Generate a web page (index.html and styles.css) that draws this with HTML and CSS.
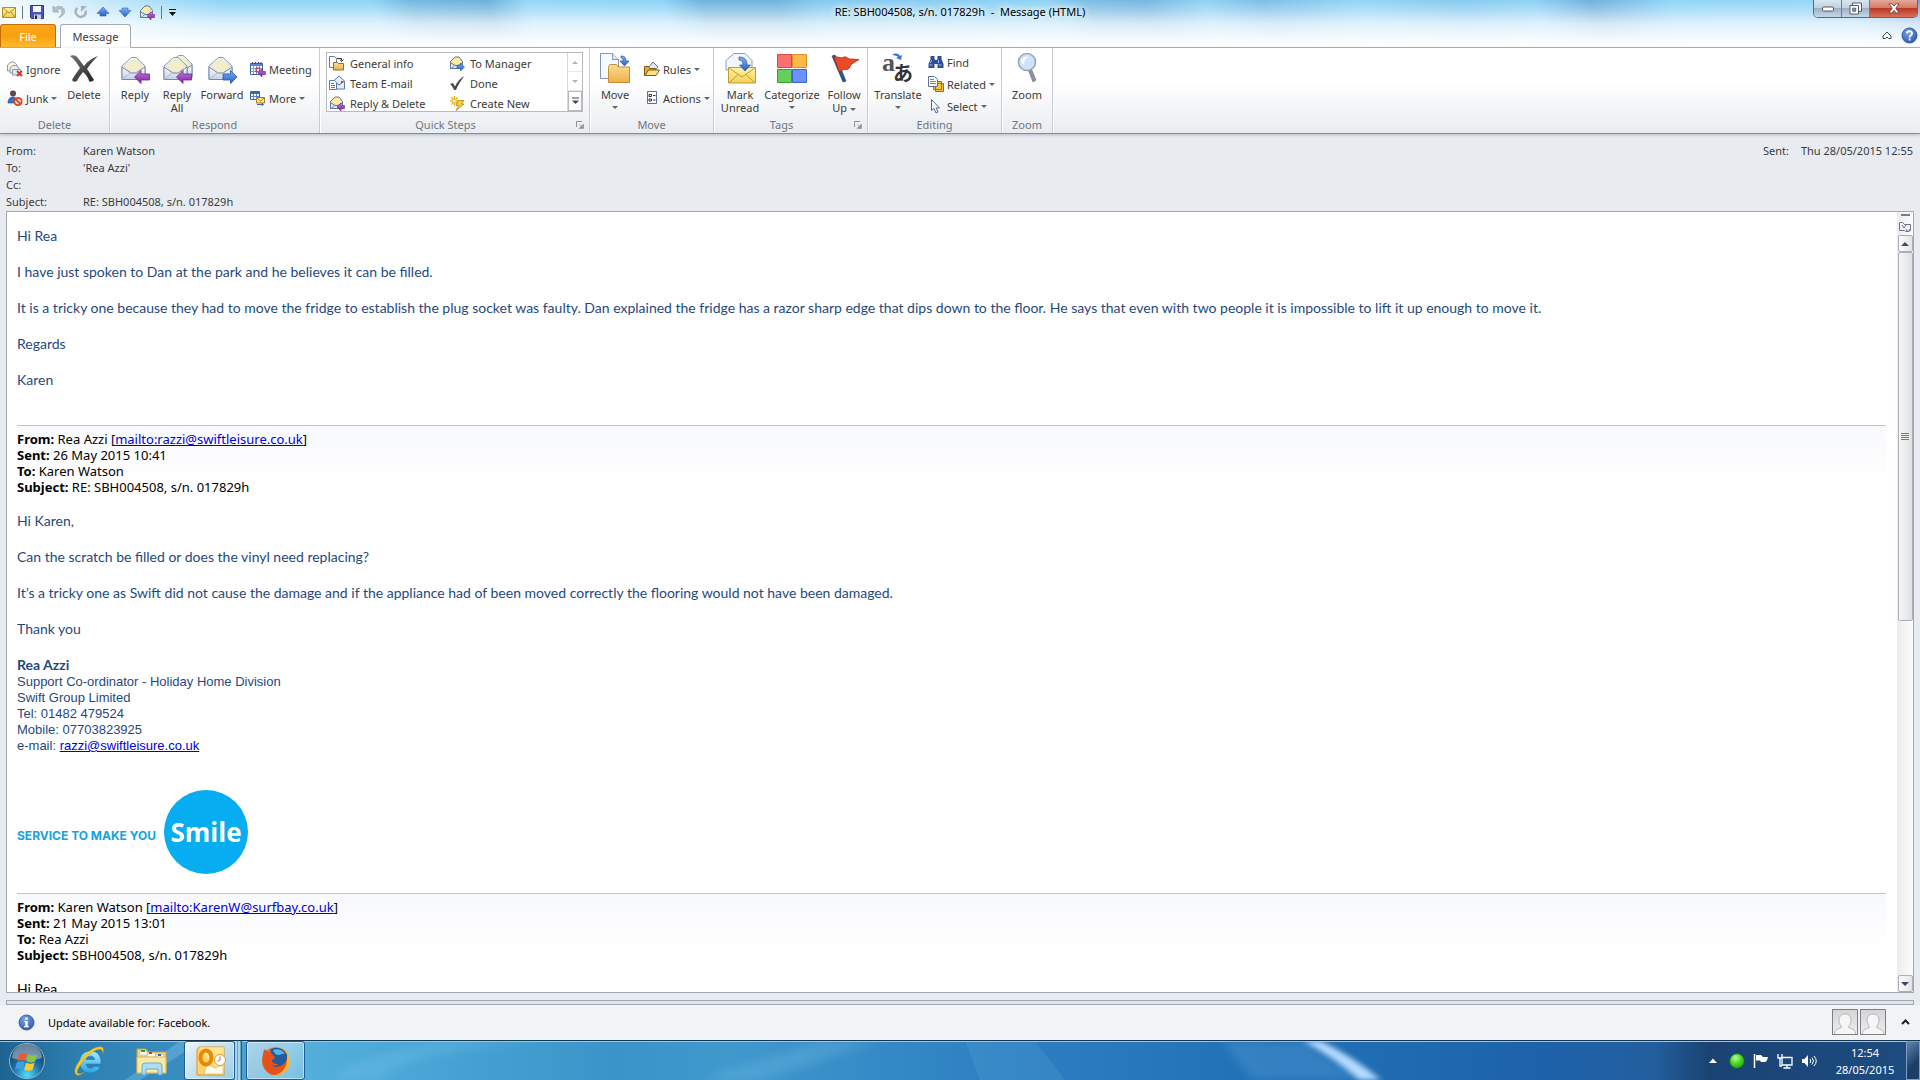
FILE: index.html
```
<!DOCTYPE html>
<html lang="en-GB">
<head>
  <meta charset="UTF-8">
  <meta name="viewport" content="width=device-width, initial-scale=1.0">
  <title>RE: SBH004508, s/n. 017829h - Message (HTML)</title>
  <link rel="stylesheet" href="styles.css">
</head>
<body>

  <!-- === SHARED ICONS === -->
  <svg class="defs" width="0" height="0" aria-hidden="true">
    <defs>
      <linearGradient id="g-paper" x1="0" y1="0" x2="0" y2="1"><stop offset="0" stop-color="#fffef4"/><stop offset="1" stop-color="#dfe3ea"/></linearGradient>
      <linearGradient id="g-front" x1="0" y1="0" x2="0" y2="1"><stop offset="0" stop-color="#fbfcff"/><stop offset="1" stop-color="#c3d1e6"/></linearGradient>
      <linearGradient id="g-purple" x1="0" y1="0" x2="0" y2="1"><stop offset="0" stop-color="#c77be0"/><stop offset="1" stop-color="#7c219c"/></linearGradient>
      <linearGradient id="g-blue" x1="0" y1="0" x2="0" y2="1"><stop offset="0" stop-color="#7db0f4"/><stop offset="1" stop-color="#2560c8"/></linearGradient>
      <linearGradient id="g-folder" x1="0" y1="0" x2="0" y2="1"><stop offset="0" stop-color="#fbdc94"/><stop offset="1" stop-color="#eeb04a"/></linearGradient>
      <linearGradient id="g-yellow" x1="0" y1="0" x2="0" y2="1"><stop offset="0" stop-color="#fff3a8"/><stop offset="1" stop-color="#f3d052"/></linearGradient>
      <linearGradient id="g-dark" x1="0" y1="0" x2="1" y2="1"><stop offset="0" stop-color="#777"/><stop offset="1" stop-color="#1d1d1d"/></linearGradient>
      <radialGradient id="g-info" cx=".4" cy=".3" r=".8"><stop offset="0" stop-color="#7ea6e8"/><stop offset="1" stop-color="#2650a8"/></radialGradient>
      <radialGradient id="g-orb" cx=".5" cy=".9" r=".9"><stop offset="0" stop-color="#4ee0ff"/><stop offset=".45" stop-color="#1f6fa6"/><stop offset="1" stop-color="#0d3050"/></radialGradient>
      <radialGradient id="g-green" cx=".4" cy=".3" r=".8"><stop offset="0" stop-color="#b4ff8c"/><stop offset=".5" stop-color="#4bd425"/><stop offset="1" stop-color="#1f9a0c"/></radialGradient>
      <radialGradient id="g-fox" cx=".3" cy=".6" r=".8"><stop offset="0" stop-color="#e8501c"/><stop offset=".7" stop-color="#ef7a1a"/><stop offset="1" stop-color="#ffd23c"/></radialGradient>
      <linearGradient id="g-ie" x1="0" y1="0" x2="0" y2="1"><stop offset="0" stop-color="#a8ecff"/><stop offset="1" stop-color="#28a4e4"/></linearGradient>

      <symbol id="envelope" viewBox="0 0 32 32">
        <path d="M3 14 12.500 5.500h4.500L26 14v13.500H3z" fill="url(#g-paper)" stroke="#8796ad"/>
        <path d="M5 14 13 8h3.500l8 6-8 7h-4z" fill="#f4edcb" stroke="#e0dcc4" stroke-width=".6"/>
        <path d="M3 15v12.500h23V15l-9 6h-5z" fill="url(#g-front)" stroke="#7588a5"/>
        <path d="M3.500 27 12 20.500M25.500 27 17 20.500" stroke="#a9b8cf" fill="none"/>
      </symbol>
      <symbol id="arrow-left" viewBox="0 0 32 32">
        <path d="M15.500 25 22 18.500V22h8.500v6H22v3.500z" fill="url(#g-purple)" stroke="#74228f" stroke-width=".8"/>
      </symbol>
      <symbol id="arrow-right" viewBox="0 0 32 32">
        <path d="M31 25 24.500 18.500V22H17v6h7.500v3.500z" fill="url(#g-blue)" stroke="#2656a8" stroke-width=".8"/>
      </symbol>
      <symbol id="mail-small" viewBox="0 0 16 16">
        <path d="M1.500 6.500 6 2h4l3.500 4.500v7h-12z" fill="#fdeaa6" stroke="#5f7597"/>
        <path d="M1.500 7.500v6h12v-6L9 10.500H6z" fill="#dbe6f6" stroke="#5b79a8"/>
        <path d="M2 13.500 6.500 10M13 13.500 8.500 10" stroke="#7c95bd" fill="none"/>
      </symbol>
      <symbol id="folder-doc" viewBox="0 0 16 16">
        <path d="M.5 1.500h5l2 2v9h-7z" fill="#fff" stroke="#5f7ba8"/>
        <path d="M8 3.500h4.500v2M11 4.500l1.500 2 2-2" fill="none" stroke="#333"/>
        <path d="M4.500 7.500h4l1 1h5v6.500h-10z" fill="url(#g-folder)" stroke="#94702a"/>
      </symbol>
    </defs>
  </svg>

  <!-- === TITLE BAR === -->
  <header class="title-area">
    <div class="title-bar">
      <div class="quick-access">
        <svg class="app-mail" width="14" height="14" viewBox="0 0 14 14"><path d="M.5 2.500h13v10H.5z" fill="url(#g-yellow)" stroke="#b98a1d"/><path d="M1 3l6 5 6-5M1 12l4-5M13 12 9 7" fill="none" stroke="#b98a1d"/></svg>
        <span class="divider"></span>
        <button title="Save"><svg width="16" height="16" viewBox="0 0 16 16"><path d="M1.500 1.500h13v13h-12l-1-1z" fill="#4757b4" stroke="#2b3888"/><path d="M4 2h8v6H4z" fill="#f4f6fc"/><path d="M5 10.500h7V15H5z" fill="#c9cede"/><path d="M6 11.500h2V15H6z" fill="#1c2458"/></svg></button>
        <button title="Undo"><svg width="16" height="16" viewBox="0 0 16 16"><path d="M2 2v6h6L5.500 5.800C8 4 11 5 11 8c0 2.500-1.500 4-3.500 5.500C12 12 14 10 13.500 6.500 13 2.500 7.500 1 4 4z" fill="#b9c0ca" stroke="#9aa2ae" stroke-width=".7"/></svg></button>
        <button title="Redo"><svg width="16" height="16" viewBox="0 0 16 16"><path d="M4.500 4A5 5 0 1 0 12.500 6.500" fill="none" stroke="#aab1bc" stroke-width="2.400"/><path d="M8 2h6v6z" fill="#aab1bc" transform="rotate(-90 11 5)"/></svg></button>
        <button title="Previous item"><svg width="16" height="16" viewBox="0 0 16 16"><path d="M8 3 14 9.500h-3V12H5V9.500H2z" fill="url(#g-blue)" stroke="#3262c0" stroke-width=".6"/></svg></button>
        <button title="Next item"><svg width="16" height="16" viewBox="0 0 16 16"><path d="M8 13 14 6.500h-3V4H5v2.500H2z" fill="url(#g-blue)" stroke="#3262c0" stroke-width=".6"/></svg></button>
        <button title="Reply &amp; Delete"><svg width="16" height="16" viewBox="0 0 16 16"><use href="#mail-small"/><path d="M8 12 12 8v2.500h3.500v3H12V16z" fill="url(#g-purple)" stroke="#74228f" stroke-width=".6"/></svg></button>
        <span class="divider"></span>
        <button title="Customise"><svg width="9" height="9" viewBox="0 0 9 9"><path d="M1 1.500h7" stroke="#111" /><path d="M1 4h7L4.500 8z" fill="#111"/></svg></button>
      </div>
      <h1>RE: SBH004508, s/n. 017829h&nbsp; -&nbsp; Message (HTML)</h1>
      <div class="window-buttons">
        <button class="win-min" title="Minimise"><svg width="12" height="6" viewBox="0 0 12 6"><rect x=".5" y="1" width="11" height="4" rx="1" fill="#fff" stroke="#555b68"/></svg></button>
        <button class="win-max" title="Restore"><svg width="13" height="13" viewBox="0 0 13 13"><path d="M3.500 1h9v8.500h-9z" fill="#fff" stroke="#555b68"/><path d="M1 3.500h8.500V12H1z" fill="#fff" stroke="#555b68"/><path d="M3.700 6.200h3v3h-3z" fill="#9aa" stroke="#555b68"/></svg></button>
        <button class="win-close" title="Close"><svg width="12" height="11" viewBox="0 0 12 11"><path d="M1 .8h3l2 2.400L8 .8h3L7.800 5.300 11 10H8L6 7.400 4 10H1l3.200-4.700z" fill="#fff" stroke="#5e3a3c" stroke-width=".8"/></svg></button>
      </div>
    </div>
    <nav class="tabs">
      <button class="tab tab-file">File</button>
      <button class="tab tab-active">Message</button>
      <span class="spacer"></span>
      <button class="plain" title="Minimise the Ribbon"><svg width="10" height="9" viewBox="0 0 10 9"><path d="M1 5 5 1l4 4v2.500H6.500L5 6 3.500 7.500H1z" fill="#fff" stroke="#3d4653"/></svg></button>
      <button class="plain" title="Help"><svg width="17" height="17" viewBox="0 0 17 17"><circle cx="8.500" cy="8.500" r="7.500" fill="url(#g-info)" stroke="#2d57a8"/><path d="M6 6.500C6 3.500 11 3.500 11 6.400c0 2-2.400 2-2.400 4M8.600 11.500v2" fill="none" stroke="#fff" stroke-width="1.800"/></svg></button>
    </nav>
  </header>

  <!-- === RIBBON === -->
  <section class="ribbon">
    <div class="group group-delete">
      <div class="group-body">
        <div class="stack">
          <button class="small"><svg width="16" height="16" viewBox="0 0 16 16"><path d="M.5 4 4 1h3l3 3v6H.5z" fill="#fdf4cf" stroke="#8c99ab"/><path d="M3 7l3-2.500h3L12 7v5H3z" fill="#e9eef5" stroke="#8c99ab"/><path d="M5.500 8.500h8V14h-8z" fill="#e1e8f2" stroke="#8c99ab"/><path d="M10 10l5 5M15 10l-5 5" stroke="#d9392a" stroke-width="2"/></svg><span>Ignore</span></button>
          <button class="small"><svg width="16" height="16" viewBox="0 0 16 16"><circle cx="6" cy="3.500" r="3" fill="#5b4b44"/><path d="M1 13c0-4 2-6 5-6s4 2 4 6z" fill="#3a6fc0" stroke="#24498c" stroke-width=".6"/><circle cx="11" cy="11.500" r="3.700" fill="#fbe6df" stroke="#d8431f" stroke-width="1.800"/><path d="M8.500 9l5 5" stroke="#d8431f" stroke-width="1.800"/></svg><span>Junk</span><i class="caret"></i></button>
        </div>
        <button class="large"><svg width="32" height="32" viewBox="0 0 32 32"><path d="M2 4c2-1 4-1 6 0 3 3 5 6 8 10 4-5 8-8 14-10-4 4-8 8-11 13 3 4 5 8 7 11-2 2-4 2-5 1-1-4-3-6-6-9-3 4-5 6-6 9-2 1-4 1-5-1 2-4 5-8 8-12C9 11 6 7 2 4z" fill="url(#g-dark)"/></svg><span>Delete</span></button>
      </div>
      <h2>Delete</h2>
    </div>

    <div class="group group-respond">
      <div class="group-body">
        <button class="large"><svg width="32" height="32" viewBox="0 0 32 32"><use href="#envelope"/><use href="#arrow-left"/></svg><span>Reply</span></button>
        <button class="large"><svg width="32" height="32" viewBox="0 0 32 32"><g transform="translate(5 -2)"><use href="#envelope" width="32" height="32"/></g><use href="#envelope" width="32" height="32"/><use href="#arrow-left"/></svg><span>Reply<br>All</span></button>
        <button class="large large-wide"><svg width="32" height="32" viewBox="0 0 32 32"><use href="#envelope"/><use href="#arrow-right"/></svg><span>Forward</span></button>
        <div class="stack">
          <button class="small"><svg width="16" height="16" viewBox="0 0 16 16"><path d="M.5 2.500h12v11H.5z" fill="#fff" stroke="#3c63ad"/><path d="M1 4h11" stroke="#5e87d0" stroke-width="2"/><path d="M3.500 5v8M6.500 5v8M9.500 5v8M1 7.500h11M1 10.500h11" stroke="#7d9bd2"/><path d="M2.500 1v2M5.500 1v2M8.500 1v2M11 1v2" stroke="#2a4a8c"/><path d="M6 7h4v4H6z" fill="none" stroke="#cc2434"/><path d="M8 12 12 8v2.500h3.500v3H12V16z" fill="url(#g-purple)" stroke="#74228f" stroke-width=".6"/></svg><span>Meeting</span></button>
          <button class="small"><svg width="16" height="16" viewBox="0 0 16 16"><path d="M.5 1.500h9v8h-9z" fill="#fff" stroke="#3c63ad"/><path d="M1 3h8" stroke="#3d64b4" stroke-width="2"/><path d="M3.500 4v5M6.500 4v5M1 6.500h8" stroke="#5f82c4"/><path d="M6.500 7.500h8v5.500h-8z" fill="#ffe79a" stroke="#a57d1e"/><path d="M7 8l3.500 3L14 8" fill="none" stroke="#a57d1e"/><path d="M7 14.500h6M11.500 13l2 1.500-2 1.500" fill="none" stroke="#3c63ad"/></svg><span>More</span><i class="caret"></i></button>
        </div>
      </div>
      <h2>Respond</h2>
    </div>

    <div class="group group-steps">
      <div class="group-body">
        <div class="gallery">
          <div class="gallery-items">
            <button class="small"><svg width="16" height="16"><use href="#folder-doc"/></svg><span>General info</span></button>
            <button class="small"><svg width="16" height="16" viewBox="0 0 16 16"><use href="#mail-small"/><path d="M8 10.500h3.500V8l4 4-4 4v-2.500H8z" fill="url(#g-blue)" stroke="#2656a8" stroke-width=".6"/></svg><span>To Manager</span></button>
            <button class="small"><svg width="16" height="16" viewBox="0 0 16 16"><path d="M4.500 6 10 1l5.500 5v8h-11z" fill="#e3ecf8" stroke="#5b79a8"/><path d="M5 6.500l5 3.500 5-3.500" fill="none" stroke="#5b79a8"/><path d="M12 6h2v2h-2z" fill="#c33"/><path d="M.5 5.500h5l2 2v7h-7z" fill="#fff" stroke="#5b79a8"/><path d="M2 8.500h3M2 10.500h4M2 12.500h4" stroke="#5b79a8"/></svg><span>Team E-mail</span></button>
            <button class="small"><svg width="16" height="16" viewBox="0 0 16 16"><path d="M1 9l3-1 2 3.500C8 7 11 3.500 15.500 1 12 5 9 10 7 15H5C4 12.500 3 10.500 1 9z" fill="#484848"/></svg><span>Done</span></button>
            <button class="small"><svg width="16" height="16" viewBox="0 0 16 16"><use href="#mail-small"/><path d="M8 12 12 8v2.500h3.500v3H12V16z" fill="url(#g-purple)" stroke="#74228f" stroke-width=".6"/></svg><span>Reply &amp; Delete</span></button>
            <button class="small"><svg width="16" height="16" viewBox="0 0 16 16"><path d="M5.500 1v10M1 6h9M2.500 2.500l6 7M8.500 2.500l-6 7" stroke="#e8b61d" stroke-width="1.400"/><circle cx="5.500" cy="6" r="1.500" fill="#fff6c4"/><path d="M9 5.500h6L12.500 9H15l-8 6.500 2.500-5H7z" fill="#f7cf3c" stroke="#a67c12" stroke-width=".7"/></svg><span>Create New</span></button>
          </div>
          <div class="gallery-scroll">
            <button disabled title="Up"><i class="caret caret-up"></i></button>
            <button disabled title="Down"><i class="caret"></i></button>
            <button title="More"><svg width="9" height="8" viewBox="0 0 9 8"><path d="M1 1h7" stroke="#444"/><path d="M1 3.500h7L4.500 7z" fill="#444"/></svg></button>
          </div>
        </div>
      </div>
      <h2>Quick Steps</h2>
      <button class="launcher" title="Manage Quick Steps"><svg width="8" height="8" viewBox="0 0 8 8"><path d="M.5 6V.5H6" fill="none" stroke="#8a919b"/><path d="M3 3l3 3M7.500 3v4.500H3z" fill="#8a919b" stroke="#8a919b" stroke-width=".6"/></svg></button>
    </div>

    <div class="group group-move">
      <div class="group-body">
        <button class="large"><svg width="32" height="32" viewBox="0 0 32 32"><path d="M1.500 1.500h12l6 6v19h-18z" fill="#f6f9fd" stroke="#7f96bb"/><path d="M13.500 1.500v6h6" fill="#dce6f4" stroke="#7f96bb"/><path d="M22 4c4 0 5 2 5 5h3l-4.500 5L21 9h3c0-2 0-3-2-3z" fill="url(#g-blue)" stroke="#2656a8" stroke-width=".7"/><path d="M9.500 15.500c0-2 1-3 2-3h6l2 2.500h11v15.500h-21z" fill="url(#g-folder)" stroke="#c48d33"/></svg><span>Move</span><i class="caret"></i></button>
        <div class="stack">
          <button class="small"><svg width="16" height="16" viewBox="0 0 16 16"><path d="M3 8 9 1l5 5-4 5z" fill="#dfe9f6" stroke="#5d7294"/><path d="M.5 5.500h4l1 2h6v7H.5z" fill="#e9a92d" stroke="#7d5a17"/><path d="M1 14.500 4.500 9h11L12 14.500z" fill="#ffdf88" stroke="#7d5a17"/></svg><span>Rules</span><i class="caret"></i></button>
          <button class="small"><svg width="16" height="16" viewBox="0 0 16 16"><path d="M3.500 1.500h9v12h-9z" fill="#fff" stroke="#596f93"/><path d="M5 4.500h2.500v2H5zM5 9h2.500v2H5z" fill="none" stroke="#333"/><path d="M9 5.500h2.500M9 10h2.500" stroke="#333"/></svg><span>Actions</span><i class="caret"></i></button>
        </div>
      </div>
      <h2>Move</h2>
    </div>

    <div class="group group-tags">
      <div class="group-body">
        <button class="large"><svg width="32" height="32" viewBox="0 0 32 32"><path d="M2 14V8.500L10 1.500h11l7 7V18H2z" fill="#f2f6fc" stroke="#8b9db9"/><path d="M4.500 15.500h27v15.500h-27z" fill="url(#g-yellow)" stroke="#c49a31"/><path d="M5 16l13 9 13-9M5 31l9-8.500M31 31l-9-8.500" fill="none" stroke="#c49a31"/><path d="M15 5c6 0 8 3 8 8h3.500L21 19l-5.500-6H19c0-3-1-5-4-5z" fill="url(#g-blue)" stroke="#2656a8" stroke-width=".7"/></svg><span>Mark<br>Unread</span></button>
        <button class="large"><svg width="32" height="32" viewBox="0 0 32 32"><path d="M1.500 2.500h14v13h-14z" fill="#fb7070" stroke="#d64747"/><path d="M16.500 2.500h14v13h-14z" fill="#fcb94a" stroke="#d98e23"/><path d="M1.500 17.500h14v13h-14z" fill="#66cf5a" stroke="#36a02d"/><path d="M16.500 17.500h14v13h-14z" fill="#6b93fb" stroke="#3a62d6"/></svg><span>Categorize</span><i class="caret"></i></button>
        <button class="large"><svg width="32" height="32" viewBox="0 0 32 32"><path d="M4 4l3-1 11 26-3 1z" fill="#31528f" stroke="#1d3566" stroke-width=".6"/><path d="M6 5c4-1 6 2 10 0 3-1 4 3 7 2l8 .500-8 5-2 4c-3 2-5 0-7 2l-3 1z" fill="#ea4a28" stroke="#a82c14" stroke-width=".8"/></svg><span>Follow<br>Up <i class="caret"></i></span></button>
      </div>
      <h2>Tags</h2>
      <button class="launcher" title="Tags"><svg width="8" height="8" viewBox="0 0 8 8"><path d="M.5 6V.5H6" fill="none" stroke="#8a919b"/><path d="M3 3l3 3M7.500 3v4.500H3z" fill="#8a919b" stroke="#8a919b" stroke-width=".6"/></svg></button>
    </div>

    <div class="group group-editing">
      <div class="group-body">
        <button class="large"><svg class="translate" width="32" height="32" viewBox="0 0 32 32"><text x="0" y="19" class="glyph-a">a</text><text x="11" y="29" class="glyph-ja">あ</text><path d="M10 3c4-3 7-1 8 1l2-1-1 5-5-2 2-1c-1-1-3-2-6-2z" fill="#3a72d4"/></svg><span>Translate</span><i class="caret"></i></button>
        <div class="stack">
          <button class="small"><svg width="16" height="16" viewBox="0 0 16 16"><path d="M2.500 2h4v3l1 1h1l1-1V2h4v3l2 5v4h-6v-4h-3v4h-6v-4l2-5z" fill="#2c4f94"/><path d="M3.500 6l-1 3M10.500 6v3M1.500 11h3M10.500 11h3" stroke="#a8c2ee"/></svg><span>Find</span></button>
          <button class="small"><svg width="16" height="16" viewBox="0 0 16 16"><path d="M7.500 7.500h8v8h-8zM5.500 5.500h8v8h-8z" fill="#f7c443" stroke="#94702a"/><path d="M.5.500h6l3 3v7h-9z" fill="#fff" stroke="#5d7294"/><path d="M2 3.500h4M2 5.500h6M2 7.500h6" stroke="#6f86ad"/></svg><span>Related</span><i class="caret"></i></button>
          <button class="small"><svg width="16" height="16" viewBox="0 0 16 16"><path d="M3.500 1.500v11l2.500-2 2 4.500 2-1-2-4h3.500z" fill="#fff" stroke="#4f6a96"/></svg><span>Select</span><i class="caret"></i></button>
        </div>
      </div>
      <h2>Editing</h2>
    </div>

    <div class="group group-zoom">
      <div class="group-body">
        <button class="large"><svg width="32" height="32" viewBox="0 0 32 32"><path d="M17 17l3-1 5 12-3 2z" fill="#8d929b" stroke="#666b75" stroke-width=".6"/><circle cx="16" cy="10" r="8.500" fill="#cfe3fa" stroke="#9aa4b3" stroke-width="1.600"/><path d="M10 10c0-4 4-6 8-5-3 1-5 3-5 8z" fill="#fff"/></svg><span>Zoom</span></button>
      </div>
      <h2>Zoom</h2>
    </div>
  </section>

  <!-- === MESSAGE === -->
  <section class="message">
    <div class="message-header">
      <dl class="fields">
        <dt>From:</dt><dd>Karen Watson</dd>
        <dt>To:</dt><dd>'Rea Azzi'</dd>
        <dt>Cc:</dt><dd></dd>
        <dt>Subject:</dt><dd>RE: SBH004508, s/n. 017829h</dd>
      </dl>
      <dl class="sent"><dt>Sent:</dt><dd>Thu 28/05/2015 12:55</dd></dl>
    </div>

    <div class="reader">
      <article class="mail">
        <p>Hi Rea</p>
        <p>I have just spoken to Dan at the park and he believes it can be filled.</p>
        <p>It is a tricky one because they had to move the fridge to establish the plug socket was faulty. Dan explained the fridge has a razor sharp edge that dips down to the floor. He says that even with two people it is impossible to lift it up enough to move it.</p>
        <p>Regards</p>
        <p>Karen</p>

        <div class="quote quote-first">
          <div><b>From:</b> Rea Azzi [<a href="mailto:razzi@swiftleisure.co.uk">mailto:razzi@swiftleisure.co.uk</a>]</div>
          <div><b>Sent:</b> 26 May 2015 10:41</div>
          <div><b>To:</b> Karen Watson</div>
          <div><b>Subject:</b> RE: SBH004508, s/n. 017829h</div>
        </div>

        <p>Hi Karen,</p>
        <p>Can the scratch be filled or does the vinyl need replacing?</p>
        <p>It’s a tricky one as Swift did not cause the damage and if the appliance had of been moved correctly the flooring would not have been damaged.</p>
        <p>Thank you</p>
        <p class="signer">Rea Azzi</p>
        <address class="signature">
          Support Co-ordinator - Holiday Home Division<br>
          Swift Group Limited<br>
          Tel: 01482 479524<br>
          Mobile: 07703823925<br>
          e-mail: <a href="mailto:razzi@swiftleisure.co.uk">razzi@swiftleisure.co.uk</a>
        </address>

        <div class="slogan">
          <span class="slogan-text">SERVICE TO MAKE YOU</span>
          <span class="slogan-badge">Smile</span>
        </div>

        <div class="quote">
          <div><b>From:</b> Karen Watson [<a href="mailto:KarenW@surfbay.co.uk">mailto:KarenW@surfbay.co.uk</a>]</div>
          <div><b>Sent:</b> 21 May 2015 13:01</div>
          <div><b>To:</b> Rea Azzi</div>
          <div><b>Subject:</b> SBH004508, s/n. 017829h</div>
        </div>
        <p class="oldest">Hi Rea</p>
      </article>

      <div class="scrollbar">
        <span class="split-handle"></span>
        <button class="ruler-btn" title="Select browse object"><svg width="14" height="14" viewBox="0 0 14 14"><path d="M1.500 2.500h3l2 2h6v6l-2 1h-3l-1-1h-5z" fill="#eef1f5" stroke="#6b7482"/><path d="M4 5l2 3 2-3M8 9l2 3 2-3" fill="none" stroke="#6b7482"/></svg></button>
        <button class="scroll-btn" title="Scroll up"><i class="caret caret-up"></i></button>
        <div class="track"><div class="thumb"></div></div>
        <button class="scroll-btn" title="Scroll down"><i class="caret"></i></button>
      </div>
    </div>
    <div class="splitter"></div>
  </section>

  <!-- === PEOPLE PANE === -->
  <section class="people-pane">
    <svg width="17" height="17" viewBox="0 0 17 17"><circle cx="8.500" cy="8.500" r="7.500" fill="url(#g-info)" stroke="#3a63b4"/><path d="M7.300 3.500h2.400v2.200H7.300zM6.200 7h3.500v5h1.200v1.300H6V12h1.300V8.200H6.200z" fill="#fff"/></svg>
    <span>Update available for: Facebook.</span>
    <span class="spacer"></span>
    <button class="avatar" title="Contact"><svg width="24" height="24" viewBox="0 0 24 24"><path d="M1.500 24c0-4 2-4.500 7-6.500 0-2-2.500-3-2.500-7.500C6 6.500 8.500 4 12 4s6 2.500 6 6c0 4.500-2.500 5.500-2.500 7.500 5 2 7 2.500 7 6.500" fill="#f6f6f7" stroke="#b4b5b8"/></svg></button>
    <button class="avatar" title="Contact"><svg width="24" height="24" viewBox="0 0 24 24"><path d="M1.500 24c0-4 2-4.500 7-6.500 0-2-2.500-3-2.500-7.500C6 6.500 8.500 4 12 4s6 2.500 6 6c0 4.500-2.500 5.500-2.500 7.500 5 2 7 2.500 7 6.500" fill="#f6f6f7" stroke="#b4b5b8"/></svg></button>
    <button class="plain pane-toggle" title="Expand"><svg width="9" height="6" viewBox="0 0 9 6"><path d="M1 5l3.500-3.500L8 5" fill="none" stroke="#222" stroke-width="2"/></svg></button>
  </section>

  <!-- === TASKBAR === -->
  <footer class="taskbar">
    <svg class="streaks" viewBox="0 0 1920 40" preserveAspectRatio="none">
      <path d="M125 40 180 0h22l-62 40z" fill="#8cc8ee" opacity=".35"/>
      <path class="soft" d="M330 40c20-20 60-32 110-40h100c-90 8-140 20-160 40z" fill="#8fd0ef" opacity=".2"/>
      <path class="soft" d="M700 40 820 0h60L760 40z" fill="#8fd0ef" opacity=".2"/>
      <path d="M965 0h70l30 40h-85z" fill="#6fb8e8" opacity=".16"/>
      <path class="soft" d="M1222 0h80l60 40h-110z" fill="#5aa2dc" opacity=".35"/>
      <path class="beam" d="M1303 0h18q32 16 60 40h-22q-26-24-56-40z" fill="#b5dbff"/>
    </svg>
    <button class="start" title="Start"><svg width="38" height="38" viewBox="0 0 38 38"><circle cx="19" cy="19" r="17.500" fill="url(#g-orb)" stroke="#8fb6ce"/><path d="M4 16a15 14 0 0 1 30 0q-15 5-30 0z" fill="#fff" opacity=".38"/><path d="M11 12.500q4-2.500 8-.500l-1.800 7q-4-2-8 .300z" fill="#f0592a"/><path d="M20.200 12.500q4 2.200 8.800 0l-2 7q-4 2-8.500 0z" fill="#8cc63e"/><path d="M8.800 20.500q4-2.200 8-.200l-1.900 7q-4-1.900-8 .200z" fill="#3ba0e6"/><path d="M18 20.800q4.500 2 8.600 0l-2 7q-4.500 2-8.500 0z" fill="#fdc92e"/></svg></button>
    <button class="pinned" title="Internet Explorer"><svg width="34" height="34" viewBox="0 0 34 34"><path d="M28 22.500h-6c-1.500 2.800-7.500 2.400-8-2.500h15C29.500 11 25 7 18.500 7S7.500 12 7.500 18s4.500 11 11 11c5 0 8.500-2.500 9.500-6.500zM14 15.500c.800-4.500 8.200-4.500 8.700 0z" fill="url(#g-ie)" stroke="#1c7fc0" stroke-width=".6"/><path d="M5 31c-4-1.500-2-9 4-16C17 5 28 .500 31 4c1 1.300.5 3.500-.5 5.500.300-2 0-3.500-1.500-4-4-1-12 4-17 10.500S3.500 28 6 29.500c1.500.8 4 0 7-2-3.500 3-6 4.200-8 3.500z" fill="#f6cb2c" stroke="#c59310" stroke-width=".4"/></svg></button>
    <button class="pinned" title="Explorer"><svg width="34" height="34" viewBox="0 0 34 34"><path d="M2 8V5h9l2 3h18v21H2z" fill="#f1d27c" stroke="#c79f45"/><path d="M5 7h7v4H5zM13 9h7v4h-7zM21 11h8v4h-8z" fill="#fff" stroke="#b9b9a0" stroke-width=".5"/><path d="M6 6h4v2H6z" fill="#3a9a38"/><path d="M14 8h3v2h-3z" fill="#d33"/><path d="M23 10h3v2h-3z" fill="#36c"/><path d="M2 13h29v16H2z" fill="#fae9a5" stroke="#d7b55c"/><path d="M7 31V22q0-3 3-3h14q3 0 3 3v9h-4v-6H11v6z" fill="#a7dcf6" stroke="#5aa6d4" opacity=".9"/></svg></button>
    <button class="task task-active" title="Outlook"><svg width="32" height="32" viewBox="0 0 32 32"><path d="M5 2h25v28H3V5z" fill="#fbd567" stroke="#d9932a"/><path d="M5 2h25v28L18 18z" fill="#fff0b3" opacity=".6"/><path d="M13 19l8 4 8-3v9H10z" fill="#fffbee" stroke="#e9c57c"/><ellipse cx="12" cy="12.500" rx="5.500" ry="7" fill="none" stroke="#e98708" stroke-width="4"/><circle cx="26" cy="15" r="5.500" fill="#fff" stroke="#dc9a2e"/><path d="M26 11.500V15l-2.500 1.500" fill="none" stroke="#b7751a"/></svg></button>
    <span class="stack-edge"></span>
    <button class="task" title="Firefox"><svg width="32" height="32" viewBox="0 0 32 32"><circle cx="16" cy="16" r="14" fill="url(#g-fox)"/><path d="M10 5c6-5 17-2 18 9 1 7-4 11-9 11-4 0-7-2-7-5 2 1 4 1 6-1-3 0-6-1-6-4l3-2c-2-2-4-4-5-8z" fill="#225a9e"/><path d="M13 5c5-2 10 0 12 4-3-1-4 1-7 1-2 0-4-2-5-5z" fill="#58b3e6"/><path d="M3 9c0-2 1-4 2-5 1 2 3 3 5 3l5 5c-1 2-4 2-5 4 0 5 5 7 10 5 4-1 6-4 7-8 3 8-3 16-11 17C8 31 1 22 3 9z" fill="#e5511d"/><path d="M27 9c4 5 4 12-1 17-3 3-7 4-11 4 8-2 13-8 12-21z" fill="#fdb827"/></svg></button>

    <span class="spacer"></span>
    <div class="tray">
      <button title="Show hidden icons"><svg width="8" height="5" viewBox="0 0 8 5"><path d="M0 5l4-4.500L8 5z" fill="#fff"/></svg></button>
      <svg width="16" height="16" viewBox="0 0 16 16"><circle cx="8" cy="8" r="7.200" fill="url(#g-green)" stroke="#1b7e10" stroke-width=".6"/></svg>
      <svg width="16" height="16" viewBox="0 0 16 16"><path d="M1.500 1v14" stroke="#fff" stroke-width="1.500"/><path d="M3 2h5l2 2h5c-.500 3-2 5-3 5H8L7 7.500H3z" fill="#fff"/></svg>
      <svg width="16" height="16" viewBox="0 0 16 16"><path d="M5 4.500h10v7.500H5zM10 12v2.500M6.500 15h7" fill="none" stroke="#fff" stroke-width="1.300"/><path d="M1 1v4h4V1M3 5v8h2" fill="none" stroke="#fff" stroke-width="1.300"/></svg>
      <svg width="16" height="16" viewBox="0 0 16 16"><path d="M1 6h2.500L7 2v12l-3.500-4H1z" fill="#fff"/><path d="M9 6q1.500 2 0 4M11 4.500q3 3.500 0 7M13 3q4.500 5 0 10" fill="none" stroke="#fff"/></svg>
    </div>
    <time class="clock" datetime="2015-05-28T12:54">12:54<br>28/05/2015</time>
    <button class="show-desktop" title="Show desktop"></button>
  </footer>

</body>
</html>
```

FILE: styles.css
```
* {
  margin: 0;
  padding: 0;
  box-sizing: border-box;
}

body {
  font-family: "Noto Sans", "Open Sans", sans-serif;
  font-size: 11px;
  color: #3b3b3b;
  background: #e8ecf1;
  height: 100vh;
  overflow: hidden;
  display: flex;
  flex-direction: column;
}

button {
  font: inherit;
  color: inherit;
  background: none;
  border: none;
  cursor: pointer;
}

svg {
  display: block;
  flex: none;
}

.defs {
  position: absolute;
}

.spacer {
  flex: 1;
}

.caret {
  display: inline-block;
  width: 0;
  height: 0;
  border: 3px solid transparent;
  border-top-color: #666;
  border-bottom: none;
  vertical-align: middle;
}

.caret-up {
  border-top: none;
  border-bottom: 3px solid #666;
}

/* === TITLE BAR === */
.title-area {
  flex: none;
  border-bottom: 1px solid #a3a9b2;
  background:
    linear-gradient(to right, rgba(255,255,255,0.9) 0, rgba(255,255,255,0) 220px),
    linear-gradient(to bottom, rgba(255,255,255,0) 0, rgba(255,255,255,0.25) 20%, rgba(255,255,255,0.7) 50%, #fff 95%),
    linear-gradient(70deg, #8fd4f6 19%, #8fd4f6 20%, #74b8e0 22%, #6cb0db 26%, #92d6f7 28%, #8dd3f6 35%, #6fb4de 37%, #6fb4de 41%, #82c9ee 43%, #8ed3f5 55%, #79bce4 57%, #74b7e0 60%, #8fd2f4 63%, #7cbfe6 66%, #94d5f6 71%, #86caee 76%, #8ed2f5 80%, #70b0dc 83%, #8fd4f7 87%, #93d6f8 96%, #6fa5d6 100%);
}

.title-bar {
  display: grid;
  grid-template-columns: 1fr auto 1fr;
  height: 24px;
}

.title-bar h1 {
  font-size: 11px;
  font-weight: normal;
  line-height: 24px;
  color: #000;
  text-shadow: 0 0 6px #fff, 0 0 8px #fff;
}

.quick-access {
  display: flex;
  align-items: center;
  gap: 6px;
  padding-left: 2px;
}

.divider {
  width: 1px;
  height: 13px;
  background: #6c7580;
}

.window-buttons {
  justify-self: end;
  display: flex;
  height: 18px;
  margin-right: 2px;
  border: 1px solid #5b6878;
  border-top: none;
  border-radius: 0 0 5px 5px;
  overflow: hidden;
}

.window-buttons button {
  width: 28px;
  display: flex;
  align-items: center;
  justify-content: center;
  border-right: 1px solid #6f7c8c;
  background: linear-gradient(#d9e6f1 0, #c2d2e0 45%, #9db1c4 50%, #c6d8e8 100%);
}

.window-buttons .win-close {
  width: 47px;
  border-right: none;
  background: linear-gradient(#e5a899 0, #d47a68 45%, #b93a26 50%, #d9705a 100%);
}

/* === TABS === */
.tabs {
  display: flex;
  align-items: center;
  height: 23px;
  padding-right: 2px;
  gap: 9px;
}

.tab {
  align-self: stretch;
  border-radius: 3px 3px 0 0;
}

.tab-file {
  width: 56px;
  color: #fff;
  border: 1px solid #c3700a;
  border-bottom: none;
  background: linear-gradient(#f9a61a 0, #f9a010 50%, #fdbb2c 100%);
}

.tab-active {
  width: 71px;
  margin: 0 0 -1px -5px;
  background: #fff;
  border: 1px solid #a3a9b2;
  border-bottom: none;
}

/* === RIBBON === */
.ribbon {
  flex: none;
  display: flex;
  height: 86px;
  background: linear-gradient(#fff 0, #fff 40%, #e9ecf0 100%);
  border-bottom: 1px solid #868c94;
  box-shadow: 0 1px 3px #b5bac2;
}

.group {
  position: relative;
  display: flex;
  flex-direction: column;
  border-right: 1px solid #c9cdd3;
  box-shadow: 1px 0 0 #fff;
}

.group h2 {
  font-size: 11px;
  font-weight: normal;
  line-height: 16px;
  color: #6e7680;
  text-align: center;
}

.group-body {
  display: flex;
  height: 69px;
  padding-top: 4px;
}

.group-delete { width: 110px; }
.group-respond { width: 210px; }
.group-steps { width: 270px; }
.group-move { width: 124px; }
.group-tags { width: 154px; }
.group-editing { width: 134px; }
.group-zoom { width: 51px; }

.group-delete .group-body { padding-left: 7px; }
.group-delete .stack { width: 56px; }
.group-respond .group-body { padding-left: 4px; }
.group-respond .stack,
.group-move .stack { padding-left: 4px; }

/* leave room for the launcher in the corner */
.group-steps h2,
.group-tags h2 {
  padding-right: 18px;
}

.large {
  flex: none;
  display: flex;
  flex-direction: column;
  align-items: center;
  width: 42px;
  line-height: 13px;
  white-space: nowrap;
}

.large span {
  margin-top: 4px;
}

.large > .caret {
  margin-top: 5px;
}

.large-wide { width: 48px; }
.group-move .large { width: 50px; }
.group-tags .large { width: 52px; }
.group-editing .large { width: 60px; }
.group-zoom .large { width: 50px; }

.stack {
  display: flex;
  flex-direction: column;
  align-items: flex-start;
  gap: 9px;
  padding-top: 7px;
}

.group-editing .stack {
  gap: 2px;
  padding-top: 0;
}

.small {
  display: flex;
  align-items: center;
  gap: 3px;
  height: 20px;
  white-space: nowrap;
}

.translate {
  overflow: visible;
}

.glyph-a {
  font: bold 26px "Liberation Serif", serif;
  fill: #555;
}

.glyph-ja {
  font: bold 20px "Noto Sans CJK JP", sans-serif;
  fill: #333;
}

.gallery {
  display: flex;
  width: 257px;
  height: 60px;
  margin: 0 0 0 6px;
  border: 1px solid #b6bac0;
  background: #fff;
}

.gallery-items {
  flex: 1;
  display: grid;
  grid-template-columns: 120px 1fr;
  grid-auto-rows: 20px;
  padding-left: 2px;
}

.gallery-items .small {
  gap: 5px;
}

.gallery-scroll {
  display: flex;
  flex-direction: column;
  width: 15px;
  border-left: 1px solid #d4d7db;
}

.gallery-scroll button {
  flex: 1;
  display: flex;
  align-items: center;
  justify-content: center;
  border-bottom: 1px solid #d4d7db;
}

.gallery-scroll button:last-child {
  border: 1px solid #b6bac0;
}

.gallery-scroll button:disabled {
  opacity: 0.5;
}

.launcher {
  position: absolute;
  right: 5px;
  bottom: 4px;
}

/* === MESSAGE HEADER === */
.message {
  flex: 1;
  min-height: 0;
  display: flex;
  flex-direction: column;
  padding: 8px 6px 0;
}

.message-header {
  display: flex;
  justify-content: space-between;
  padding-bottom: 1px;
  line-height: 17px;
}

.fields {
  display: grid;
  grid-template-columns: 77px auto;
  grid-auto-rows: 17px;
}

.sent {
  display: flex;
  gap: 12px;
  padding-right: 1px;
}

/* === MAIL BODY === */
.reader {
  flex: 1;
  min-height: 0;
  display: flex;
  border: 1px solid #a2a8b3;
  background: #fff;
}

.mail {
  flex: 1;
  overflow: hidden;
  padding: 15px 11px 0 10px;
  font-family: Lato, "Open Sans", sans-serif;
  font-size: 14px;
  line-height: 18px;
  color: #1f497d;
}

.mail p {
  margin-bottom: 18px;
}

.mail a {
  color: #0000d8;
}

.quote {
  margin-bottom: 17px;
  padding-top: 5px;
  border-top: 1px solid #b5c4df;
  background: linear-gradient(#f8f9fc 0, #fff 60px);
  font-family: "Noto Sans", sans-serif;
  font-size: 13px;
  line-height: 16px;
  color: #000;
}

.quote-first {
  margin-top: 36px;
}

.mail .signer {
  margin-bottom: 0;
  font-weight: bold;
}

.signature {
  font: 13px/16px "Liberation Sans", Arial, sans-serif;
}

.mail .oldest {
  color: #000;
}

.slogan {
  display: flex;
  align-items: center;
  gap: 8px;
  margin: 36px 0 19px;
  font-weight: bold;
}

.slogan-text {
  padding-top: 8px;
  font-family: Inter, sans-serif;
  font-size: 12px;
  color: #16a3d9;
}

.slogan-badge {
  width: 84px;
  height: 84px;
  border-radius: 50%;
  background: #06adf0;
  color: #fff;
  font-family: "Open Sans", sans-serif;
  font-size: 26px;
  line-height: 84px;
  text-align: center;
}

/* === SCROLLBAR === */
.scrollbar {
  flex: none;
  display: flex;
  flex-direction: column;
  align-items: center;
  width: 16px;
  background: linear-gradient(to right, #ececee, #fbfbfb);
}

.split-handle {
  width: 9px;
  height: 2px;
  margin: 2px 0;
  background: #777e8a;
}

.ruler-btn {
  height: 17px;
}

.scroll-btn {
  display: flex;
  align-items: center;
  justify-content: center;
  width: 15px;
  height: 17px;
  border: 1px solid #a9aeb7;
  border-radius: 2px;
  background: linear-gradient(to right, #fdfdfd, #e1e3e7);
}

.scroll-btn .caret {
  border-width: 4px;
  border-bottom-width: 0;
  border-top-color: #3b4468;
}

.scroll-btn .caret-up {
  border-top-width: 0;
  border-bottom: 4px solid #444b58;
}

.track {
  flex: 1;
  width: 15px;
}

.thumb {
  display: flex;
  align-items: center;
  justify-content: center;
  height: 51%;
  border: 1px solid #a9aeb7;
  border-radius: 2px;
  background: linear-gradient(to right, #f6f6f7, #dfe0e3);
}

.thumb::after {
  content: "";
  width: 8px;
  height: 7px;
  background: repeating-linear-gradient(#777 0, #777 1px, #eee 1px, #eee 2px);
}

.splitter {
  flex: none;
  height: 5px;
  margin-top: 7px;
  border: 1px solid #a2a8b3;
  background: #e1e5ea;
}

/* === PEOPLE PANE === */
.people-pane {
  flex: none;
  display: flex;
  align-items: center;
  height: 35px;
  padding: 0 10px 1px 18px;
  background: #f1f3f5;
  color: #000;
}

.people-pane > span {
  margin-left: 13px;
}

.avatar {
  margin-right: 2px;
  border: 1px solid #7d7f83;
  background: linear-gradient(#d4d5d7, #eeeeef);
}

.pane-toggle {
  margin-left: 13px;
}

/* === TASKBAR === */
.taskbar {
  flex: none;
  position: relative;
  display: flex;
  align-items: center;
  height: 40px;
  border-top: 1px solid #16354f;
  box-shadow: inset 0 1px 0 #9cc6e2;
  background: linear-gradient(to right, #1d6491 0, #2d7fb0 4%, #3a8fc2 10%, #55b0dc 15%, #48a5d6 22%, #3a94c9 32%, #4099cd 38%, #3186c4 48%, #2a7bbf 56%, #2070b5 66%, #1f6cb2 72%, #1d62ab 80%, #235f9f 86%, #1a4373 89%, #1d4c82 100%);
  color: #fff;
}

.taskbar > * {
  position: relative;
}

.taskbar .streaks {
  position: absolute;
  inset: 0;
  width: 100%;
  height: 100%;
}

.beam {
  filter: blur(3px);
}

.soft {
  filter: blur(5px);
}

.start {
  margin: 0 12px 0 8px;
}

.pinned {
  margin: 0 15px 0 14px;
}

.task {
  display: flex;
  align-items: center;
  justify-content: center;
  width: 59px;
  height: 39px;
  border: 1px solid #1d5e8c;
  border-radius: 3px;
  background: linear-gradient(135deg, rgba(255,255,255,0.55), rgba(255,255,255,0.2));
  box-shadow: inset 0 0 0 1px rgba(255,255,255,0.5);
}

.task-active {
  width: 51px;
  background: linear-gradient(135deg, rgba(255,255,255,0.9), rgba(200,230,245,0.65));
}

.stack-edge {
  width: 7px;
  height: 39px;
  margin-right: 4px;
  border-right: 1px solid #1d5e8c;
  background: repeating-linear-gradient(to right, #a6d4ec 0, #a6d4ec 2px, #2b6f9c 3px);
}

.tray {
  display: flex;
  align-items: center;
  gap: 8px;
  margin-right: 15px;
}

.tray button {
  margin-right: 4px;
}

.clock {
  width: 66px;
  line-height: 17px;
  text-align: center;
}

.show-desktop {
  width: 14px;
  height: 39px;
  margin-left: 8px;
  border: 1px solid #7f9fc0;
  background: linear-gradient(135deg, #5f86ad, #1c3f68 60%);
}
```
